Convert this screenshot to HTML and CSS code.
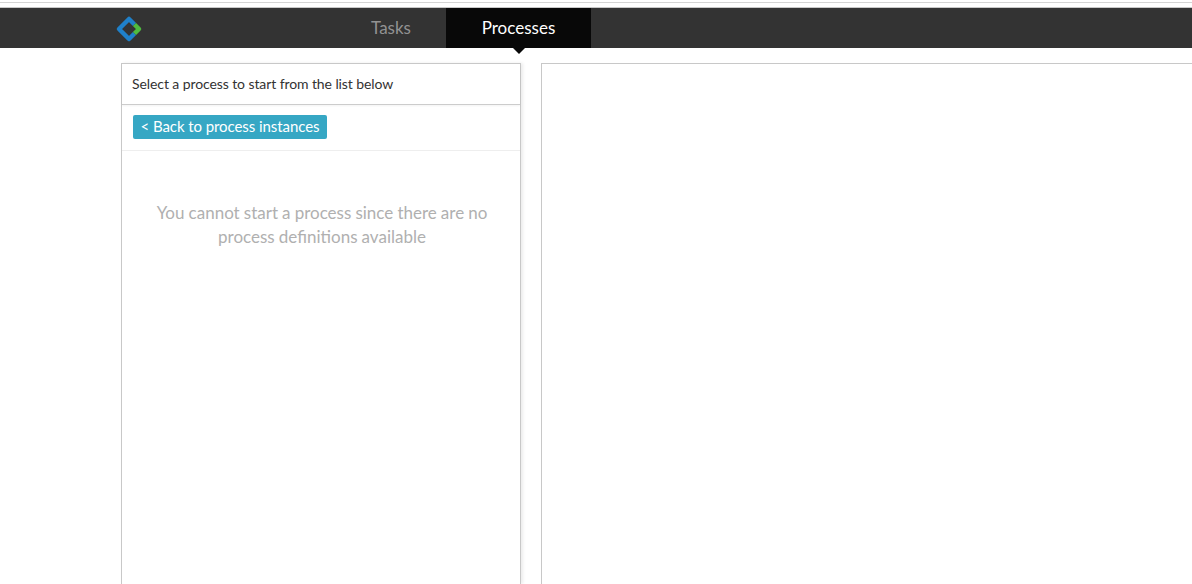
FILE: index.html
```html
<!DOCTYPE html>
<html lang="en">
<head>
<meta charset="utf-8">
<title>Processes</title>
<link rel="stylesheet" href="styles.css">
</head>
<body>
<div class="chrome-line"></div>
<header class="navbar">
  <div class="logo">
    <svg width="28" height="28" viewBox="0 0 28 28">
      <path d="M19.5 9.5 L14 4 L4 14 L14 24 L19.5 18.5" fill="none" stroke="#1f80c9" stroke-width="4.5" stroke-linejoin="round"/>
      <path d="M19.5 9.5 L24 14 L19.5 18.5" fill="none" stroke="#4fbb3f" stroke-width="4.5" stroke-linejoin="round"/>
    </svg>
  </div>
  <nav class="tabs">
    <a class="tab">Tasks</a>
    <a class="tab tab-active">Processes</a>
  </nav>
</header>
<main class="content">
  <section class="panel panel-list">
    <div class="panel-head">Select a process to start from the list below</div>
    <div class="panel-actions"><button class="btn-back">&lt; Back to process instances</button></div>
    <p class="empty">You cannot start a process since there are no process definitions available</p>
  </section>
  <section class="panel panel-detail"></section>
</main>
</body>
</html>
```
FILE: styles.css
```css
html, body {
  margin: 0;
  padding: 0;
  height: 100%;
  overflow: hidden;
  background: #fff;
  font-family: Lato, "Liberation Sans", sans-serif;
}
body {
  display: flex;
  flex-direction: column;
}
.chrome-line {
  height: 7px;
  flex: none;
  background: linear-gradient(#fff 2px, #d4d4d4 2px, #d4d4d4 3px, #fff 3px);
}
.navbar {
  height: 41px;
  flex: none;
  box-sizing: border-box;
  border-top: 1px solid #c8c8c8;
  background: #333;
  display: flex;
  align-items: center;
}
.logo {
  width: 115px;
  margin: 1px 0 0 115px;
  display: flex;
  align-items: center;
}
.logo svg { display: block; }
.tabs {
  display: flex;
  height: 40px;
  margin-left: 106px;
}
.tab {
  display: flex;
  align-items: center;
  justify-content: center;
  padding-bottom: 2px;
  box-sizing: border-box;
  font-size: 17px;
  color: #929292;
  width: 110px;
  position: relative;
}
.tab-active {
  width: 145px;
  background: #080808;
  color: #fff;
}
.tab-active::after {
  content: "";
  position: absolute;
  left: 50%;
  bottom: -6px;
  margin-left: -6px;
  border-left: 6px solid transparent;
  border-right: 6px solid transparent;
  border-top: 6px solid #080808;
}
.content {
  flex: 1;
  min-height: 0;
  display: flex;
  gap: 20px;
  padding: 15px 0 0 121px;
}
.panel {
  box-sizing: border-box;
  border: 1px solid #c8c8c8;
  border-bottom: 0;
  background: #fff;
}
.panel-list {
  width: 400px;
  flex: none;
  box-shadow: 2px 0 3px rgba(0, 0, 0, 0.08);
}
.panel-detail {
  flex: 1;
  border-right: 0;
}
.panel-head {
  height: 41px;
  box-sizing: border-box;
  padding: 0 0 2px 10px;
  display: flex;
  align-items: center;
  font-size: 14px;
  letter-spacing: -0.09px;
  color: #333;
  border-bottom: 1px solid #ccc;
  box-shadow: 0 1px 2px rgba(0, 0, 0, 0.05);
}
.panel-actions {
  height: 46px;
  box-sizing: border-box;
  padding: 10px 11px 0;
  border-bottom: 1px solid #eee;
}
.btn-back {
  display: block;
  width: 194px;
  height: 24px;
  padding: 0 0 2px;
  border: 0;
  border-radius: 2px;
  background: #36a7c4;
  color: #fff;
  font-family: inherit;
  font-size: 15px;
  letter-spacing: -0.07px;
  line-height: 22px;
  text-align: center;
}
.empty {
  margin: 50px 19px 0 21px;
  text-align: center;
  font-size: 17px;
  word-spacing: -0.25px;
  line-height: 24px;
  color: #b0b0b0;
}
```
